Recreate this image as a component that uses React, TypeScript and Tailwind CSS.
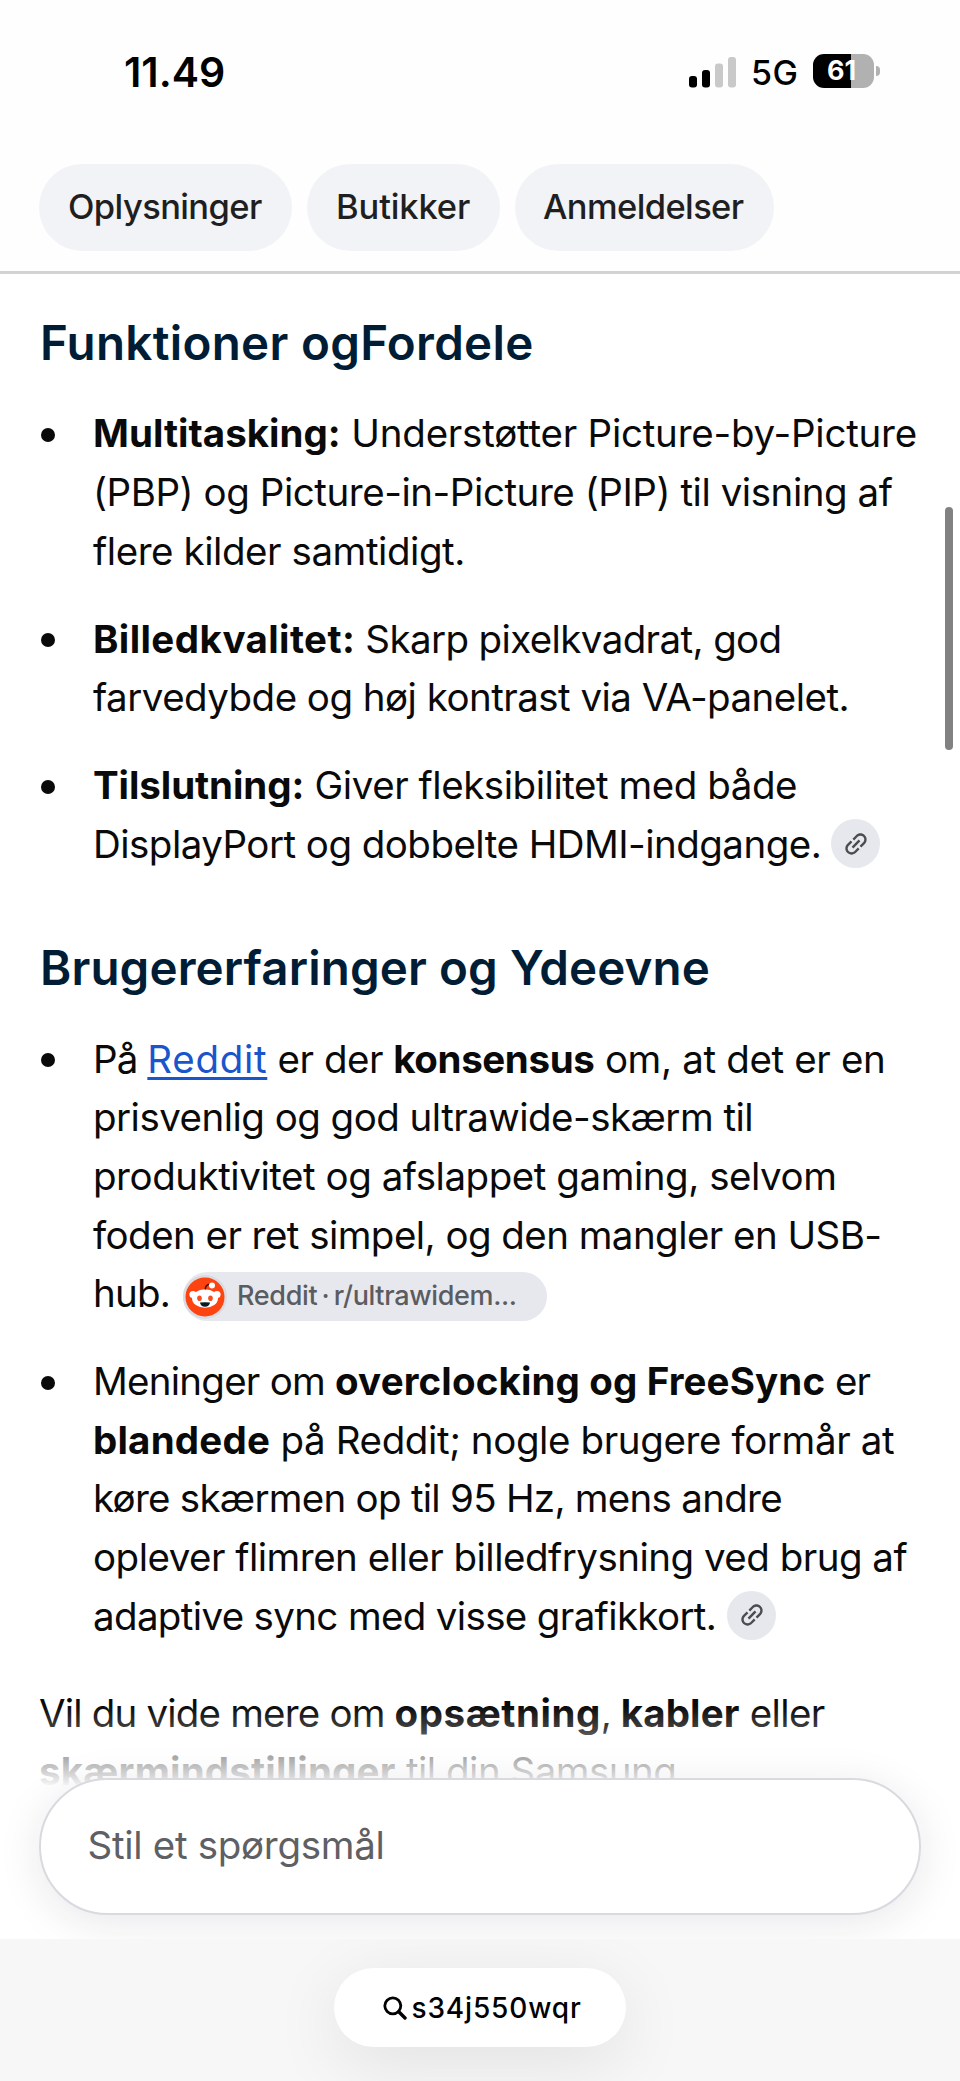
import React from "react";
import type { ReactNode } from "react";

function Line({ children, className = "" }: { children: ReactNode; className?: string }) {
  return <span className={`flex h-[58.6px] items-center whitespace-pre ${className}`}>{children}</span>;
}

function Item({ children, className = "" }: { children: ReactNode; className?: string }) {
  return (
    <li className={`flex ${className}`}>
      <span className="mt-[23px] ml-[2px] h-[14px] w-[14px] shrink-0 rounded-full bg-[#0a0a0a]" />
      <div className="ml-[38px] flex flex-col">{children}</div>
    </li>
  );
}

function LinkChip({ className = "" }: { className?: string }) {
  return (
    <span className={`-mt-[2px] flex h-[49px] w-[49px] items-center justify-center rounded-full bg-[#e7e8ee] ${className}`}>
      <svg viewBox="0 0 24 24" className="h-[30px] w-[30px] -rotate-45" fill="#4b4d51">
        <path d="M3.9 12c0-1.71 1.39-3.1 3.1-3.1h4V7H7c-2.76 0-5 2.24-5 5s2.24 5 5 5h4v-1.9H7c-1.71 0-3.1-1.39-3.1-3.1zM8 13h8v-2H8v2zm9-6h-4v1.9h4c1.71 0 3.1 1.39 3.1 3.1s-1.39 3.1-3.1 3.1h-4V17h4c2.76 0 5-2.24 5-5s-2.24-5-5-5z" />
      </svg>
    </span>
  );
}

function RedditIcon() {
  return (
    <svg viewBox="0 0 44 44" className="h-[44px] w-[44px]">
      <circle cx="22" cy="22" r="22" fill="#d9dbe1" />
      <circle cx="22" cy="22" r="19.5" fill="#fc4310" />
      <circle cx="10" cy="19.5" r="3.6" fill="#fff" />
      <circle cx="34" cy="19.5" r="3.6" fill="#fff" />
      <ellipse cx="22" cy="23.5" rx="13" ry="9.3" fill="#fff" />
      <path d="M22.3 14.5c0-3 1.5-5 4.7-5.2" fill="none" stroke="#4a1208" strokeWidth="1.6" />
      <circle cx="29" cy="10.4" r="3" fill="#fff" />
      <ellipse cx="16.5" cy="23.2" rx="2.3" ry="2.8" fill="#f4511e" />
      <ellipse cx="27.5" cy="23.2" rx="2.3" ry="2.8" fill="#f4511e" />
      <path d="M17 27.5q5-.7 10 0c-.3 2.8-2.4 4.2-5 4.2s-4.7-1.4-5-4.2z" fill="#0b1a20" />
    </svg>
  );
}

function StatusBar() {
  return (
    <div className="flex h-[143px] items-start justify-between pr-[80px] pl-[124px] text-black">
      <span className="mt-[46.5px] text-[41px] leading-[50px] font-semibold">11.49</span>
      <div className="mt-[54px] flex h-[34px] items-center">
        <svg viewBox="0 0 47 32" className="mt-[1px] h-[32px] w-[47px]">
          <rect x="0" y="20" width="8" height="11.5" rx="3" fill="#000" />
          <rect x="13" y="14" width="8" height="17.5" rx="3" fill="#000" />
          <rect x="26" y="7.5" width="8" height="24" rx="3" fill="#c9c9c9" />
          <rect x="39" y="1" width="8" height="30.5" rx="3" fill="#c9c9c9" />
        </svg>
        <span className="mt-[3px] ml-[15px] w-[62px] text-[34px] leading-[34px] font-medium tracking-[0.5px]">5G</span>
        <div className="flex h-[34px] w-[61px] items-center rounded-[11px] bg-[linear-gradient(to_right,#000_38px,#b1b1b1_38px)] pl-[14px]">
          <span className="text-[27px] leading-[34px] font-bold text-white">61</span>
        </div>
        <span className="ml-[2px] h-[10px] w-[4px] rounded-r-full bg-[#b1b1b1]" />
      </div>
    </div>
  );
}

export default function App() {
  return (
    <div className="relative flex h-[2081px] w-[960px] flex-col overflow-hidden bg-white font-['Inter',sans-serif]">
      <header className="h-[274px] shrink-0 border-b-[3px] border-[#d2d2d3] bg-[#fefefe]">
        <StatusBar />
        <nav className="mt-[20.5px] flex gap-[14.5px] pl-[39px] text-[34.5px] leading-[85px] font-medium text-[#1f1f21]">
          <span className="h-[87.5px] w-[253px] rounded-full bg-[#f2f3f6] pl-[29px] tracking-[-0.6px]">Oplysninger</span>
          <span className="h-[87.5px] w-[193.5px] rounded-full bg-[#f2f3f6] pl-[29.5px] tracking-[-0.13px]">Butikker</span>
          <span className="h-[87.5px] w-[259.5px] rounded-full bg-[#f2f3f6] pl-[28.5px] tracking-[-0.62px]">Anmeldelser</span>
        </nav>
      </header>

      <main className="flex h-[1665px] shrink-0 flex-col overflow-hidden pl-[39px] text-[38.5px] text-[#0a0a0a]">
        <h2 className="mt-[37px] ml-[1px] h-[64px] text-[47.5px] leading-[64px] font-semibold tracking-[0.3px] whitespace-pre text-[#001d35]">
          Funktioner ogFordele
        </h2>
        <ul className="mt-[30px] flex flex-col gap-[29.4px]">
          <Item>
            <Line>
              <b className="tracking-[0.02px]">Multitasking:</b>
              <span className="tracking-[-0.23px]"> Understøtter Picture-by-Picture</span>
            </Line>
            <Line className="tracking-[-0.45px]">(PBP) og Picture-in-Picture (PIP) til visning af</Line>
            <Line className="tracking-[-0.44px]">flere kilder samtidigt.</Line>
          </Item>
          <Item>
            <Line>
              <b className="tracking-[0.4px]">Billedkvalitet:</b>
              <span className="tracking-[-0.62px]"> Skarp pixelkvadrat, god</span>
            </Line>
            <Line className="tracking-[-0.53px]">farvedybde og høj kontrast via VA-panelet.</Line>
          </Item>
          <Item>
            <Line>
              <b className="tracking-[-0.08px]">Tilslutning:</b>
              <span className="tracking-[-0.46px]"> Giver fleksibilitet med både</span>
            </Line>
            <Line className="tracking-[-0.53px]">
              <span>DisplayPort og dobbelte HDMI-indgange.</span>
              <LinkChip className="ml-[10px]" />
            </Line>
          </Item>
        </ul>

        <h2 className="mt-[62px] ml-[1px] h-[64px] text-[47.5px] leading-[64px] font-semibold tracking-[0.12px] whitespace-pre text-[#001d35]">
          Brugererfaringer og Ydeevne
        </h2>
        <ul className="mt-[30.5px] flex flex-col gap-[29.4px]">
          <Item>
            <Line>
              <span className="tracking-[-0.9px]">På </span>
              <a className="tracking-[0.7px] text-[#1a55cc] underline decoration-[3px] underline-offset-[4px]">Reddit</a>
              <span className="tracking-[-0.5px]"> er der </span>
              <b className="tracking-[-0.38px]">konsensus</b>
              <span className="tracking-[-0.35px]"> om, at det er en</span>
            </Line>
            <Line className="tracking-[-0.53px]">prisvenlig og god ultrawide-skærm til</Line>
            <Line className="tracking-[-0.46px]">produktivitet og afslappet gaming, selvom</Line>
            <Line className="tracking-[-0.55px]">foden er ret simpel, og den mangler en USB-</Line>
            <Line>
              <span className="tracking-[-0.8px]">hub.</span>
              <span className="mt-[5px] ml-[13px] flex h-[49px] w-[364px] items-center rounded-full bg-[#e7e8ee]">
                <RedditIcon />
                <span className="ml-[10px] text-[27px] font-medium tracking-[-0.35px] [word-spacing:-2.5px] text-[#5b5c61]">Reddit · r/ultrawidem...</span>
              </span>
            </Line>
          </Item>
          <Item>
            <Line>
              <span className="tracking-[-0.75px]">Meninger om </span>
              <b className="tracking-[0.13px]">overclocking og FreeSync</b>
              <span className="tracking-[-1px]"> er</span>
            </Line>
            <Line>
              <b className="tracking-[0.21px]">blandede</b>
              <span className="tracking-[-0.39px]"> på Reddit; nogle brugere formår at</span>
            </Line>
            <Line className="tracking-[-0.73px]">køre skærmen op til 95 Hz, mens andre</Line>
            <Line className="tracking-[-0.51px]">oplever flimren eller billedfrysning ved brug af</Line>
            <Line className="tracking-[-0.65px]">
              <span>adaptive sync med visse grafikkort.</span>
              <LinkChip className="ml-[11px]" />
            </Line>
          </Item>
        </ul>
        <p className="mt-[38.5px] flex flex-col">
          <Line>
            <span className="tracking-[-0.82px]">Vil du vide mere om </span>
            <b className="tracking-[0.55px]">opsætning</b>
            <span className="tracking-[-1px]">, </span>
            <b className="tracking-[0.14px]">kabler</b>
            <span className="tracking-[-0.64px]"> eller</span>
          </Line>
          <Line>
            <b className="tracking-[0.2px]">skærmindstillinger</b>
            <span className="tracking-[-0.5px]"> til din Samsung</span>
          </Line>
        </p>
      </main>

      <footer className="flex h-[142px] shrink-0 justify-center overflow-hidden bg-[#f7f7f7] pt-[29px]">
        <div className="flex h-[79px] w-[292px] items-center rounded-full bg-white pl-[49px] text-black shadow-[0_16px_70px_rgba(0,0,0,0.09)]">
          <svg viewBox="0 0 24 24" className="h-[24px] w-[24px]" fill="none" stroke="#000" strokeLinecap="round">
            <circle cx="9.8" cy="9.8" r="8" strokeWidth="2.8" />
            <path d="M15.8 15.8L22 22" strokeWidth="3.4" />
          </svg>
          <span className="ml-[4.5px] text-[28px] font-medium tracking-[0.85px]">s34j550wqr</span>
        </div>
      </footer>

      <span className="absolute top-[507px] right-[7px] h-[243px] w-[8px] rounded-full bg-[#818181]" />

      <div className="pointer-events-none absolute inset-x-0 top-[1690px] flex h-[249px] flex-col overflow-hidden bg-[linear-gradient(to_bottom,rgba(255,255,255,0)_16px,rgba(255,255,255,0.24)_40px,rgba(255,255,255,0.64)_66px,rgba(255,255,255,1)_98px)] px-[39px]">
        <div className="mt-[88px] flex h-[137px] shrink-0 items-center rounded-full border-2 border-[#d9d9e0] bg-white pl-[46.5px] shadow-[0_8px_44px_rgba(30,30,60,0.1)]">
          <span className="-mt-[4px] text-[38.5px] leading-[50px] tracking-[-0.3px] text-[#5f6064]">Stil et spørgsmål</span>
        </div>
      </div>
    </div>
  );
}
